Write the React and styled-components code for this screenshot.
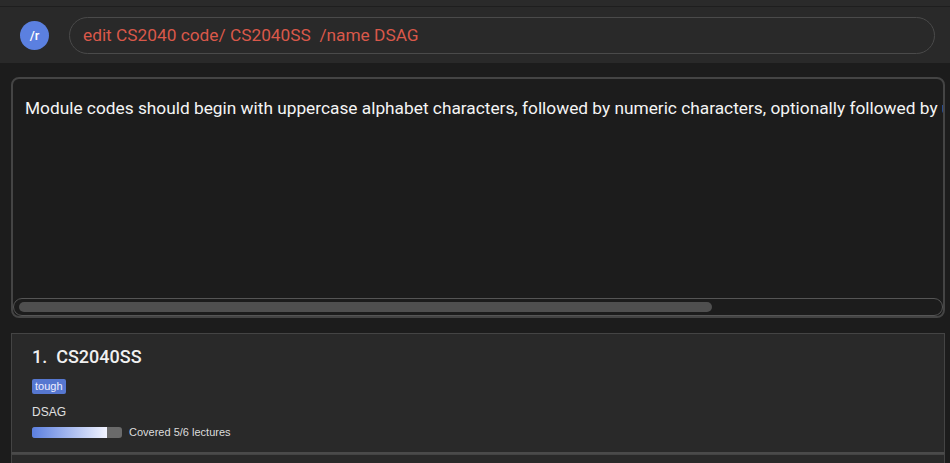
import React from 'react'
import styled, { createGlobalStyle } from 'styled-components'

const GlobalStyle = createGlobalStyle`
  html, body {
    margin: 0;
    padding: 0;
    height: 100%;
    overflow: hidden;
    background: #1c1c1c;
    font-family: Roboto, "Liberation Sans", sans-serif;
  }
`;

const Page = styled.div`
  display: flex;
  flex-direction: column;
  width: 950px;
  height: 463px;
  background: #1c1c1c;
  overflow: hidden;
`;

const MenuStrip = styled.div`
  flex: none;
  height: 6px;
  background: #2a2a2a;
  border-bottom: 1px solid #1e1e1e;
`;

const CommandBar = styled.div`
  flex: none;
  display: flex;
  align-items: center;
  gap: 20px;
  height: 56px;
  padding: 0 15px 0 20px;
  background: #292929;
`;

const Avatar = styled.div`
  flex: none;
  display: flex;
  align-items: center;
  justify-content: center;
  width: 29px;
  height: 29px;
  border-radius: 50%;
  background: #5b80e0;
  color: #fff;
  font-size: 13px;
  font-weight: 500;
`;

const CommandInput = styled.input`
  flex: 1;
  height: 37px;
  box-sizing: border-box;
  padding: 0 13px;
  border: 1.5px solid #4a4a4a;
  border-radius: 19px;
  background: #292929;
  color: #d9584a;
  font-family: Roboto, "Liberation Sans", sans-serif;
  font-size: 17.3px;
  outline: none;
`;

const Body = styled.div`
  flex: none;
  display: flex;
  flex-direction: column;
  gap: 15px;
  padding: 14px 5px 0 11px;
`;

const ResultBox = styled.div`
  flex: none;
  display: flex;
  flex-direction: column;
  height: 241px;
  box-sizing: border-box;
  border: 2px solid #444;
  border-radius: 8px;
  background: #1c1c1c;
  overflow: hidden;
`;

const Viewport = styled.div`
  flex: 1;
  overflow: hidden;
  padding: 19px 12px 0 12px;
`;

const ResultText = styled.div`
  white-space: nowrap;
  color: #f4f4f4;
  font-size: 17.3px;
  line-height: 21px;
`;

const ScrollTrack = styled.div`
  flex: none;
  display: flex;
  align-items: center;
  height: 18px;
  box-sizing: border-box;
  padding: 0 5px;
  border: 1px solid #555;
  border-radius: 9px;
`;

const ScrollThumb = styled.div`
  height: 10px;
  border-radius: 5px;
  background: #4f4f4f;
`;

const List = styled.div`
  display: flex;
  flex-direction: column;
`;

const Card = styled.div`
  display: flex;
  flex-direction: column;
  align-items: flex-start;
  padding: 12px 20px 14px;
  background: #292929;
  border: 1px solid #444;
  border-bottom: 2px solid #4a4a4a;
`;

const Title = styled.div`
  color: #f0f0f0;
  font-size: 18px;
  font-weight: 500;
  line-height: 22px;
  white-space: pre;
`;

const Tag = styled.span`
  margin-top: 11px;
  padding: 1px 3px;
  border-radius: 2px;
  background: #5677d0;
  color: #eef;
  font-family: "Liberation Sans", Arial, sans-serif;
  font-size: 11px;
  line-height: 13px;
`;

const Name = styled.div`
  margin-top: 11px;
  color: #e0e0e0;
  font-family: "Liberation Sans", Arial, sans-serif;
  font-size: 12px;
  line-height: 14px;
`;

const ProgressRow = styled.div`
  display: flex;
  align-items: center;
  gap: 7px;
  margin-top: 7px;
`;

const Track = styled.div`
  width: 90px;
  height: 11px;
  border-radius: 3px;
  background: #6a6a6a;
  overflow: hidden;
`;

const Fill = styled.div`
  height: 100%;
  background: linear-gradient(90deg, #5b7fe0, #f2f4ff);
`;

const ProgressLabel = styled.span`
  color: #dcdcdc;
  font-family: "Liberation Sans", Arial, sans-serif;
  font-size: 11px;
`;

const modules = [
  { code: 'CS2040SS', tag: 'tough', name: 'DSAG', covered: 5, total: 6 },
  { code: 'CS2030S', tag: 'core', name: 'Programming Methodology II', covered: 2, total: 12 },
]

// visible part of the result line, as a share of its full width
const scrollShare = 0.755

function ModuleCard({ index, mod }) {
  return (
    <Card>
      <Title>{`${index}.  ${mod.code}`}</Title>
      <Tag>{mod.tag}</Tag>
      <Name>{mod.name}</Name>
      <ProgressRow>
        <Track>
          <Fill style={{ width: `${(mod.covered / mod.total) * 100}%` }} />
        </Track>
        <ProgressLabel>Covered {mod.covered}/{mod.total} lectures</ProgressLabel>
      </ProgressRow>
    </Card>
  )
}

export default function App() {
  return (
    <Page>
      <GlobalStyle />
      <MenuStrip />
      <CommandBar>
        <Avatar>/r</Avatar>
        <CommandInput readOnly value="edit CS2040 code/ CS2040SS  /name DSAG" />
      </CommandBar>
      <Body>
        <ResultBox>
          <Viewport>
            <ResultText>
              Module codes should begin with uppercase alphabet characters, followed by numeric characters, optionally followed by uppercase alphabet characters.
            </ResultText>
          </Viewport>
          <ScrollTrack>
            <ScrollThumb style={{ width: `${scrollShare * 100}%` }} />
          </ScrollTrack>
        </ResultBox>
        <List>
          {modules.map((m, i) => (
            <ModuleCard key={m.code} index={i + 1} mod={m} />
          ))}
        </List>
      </Body>
    </Page>
  )
}
